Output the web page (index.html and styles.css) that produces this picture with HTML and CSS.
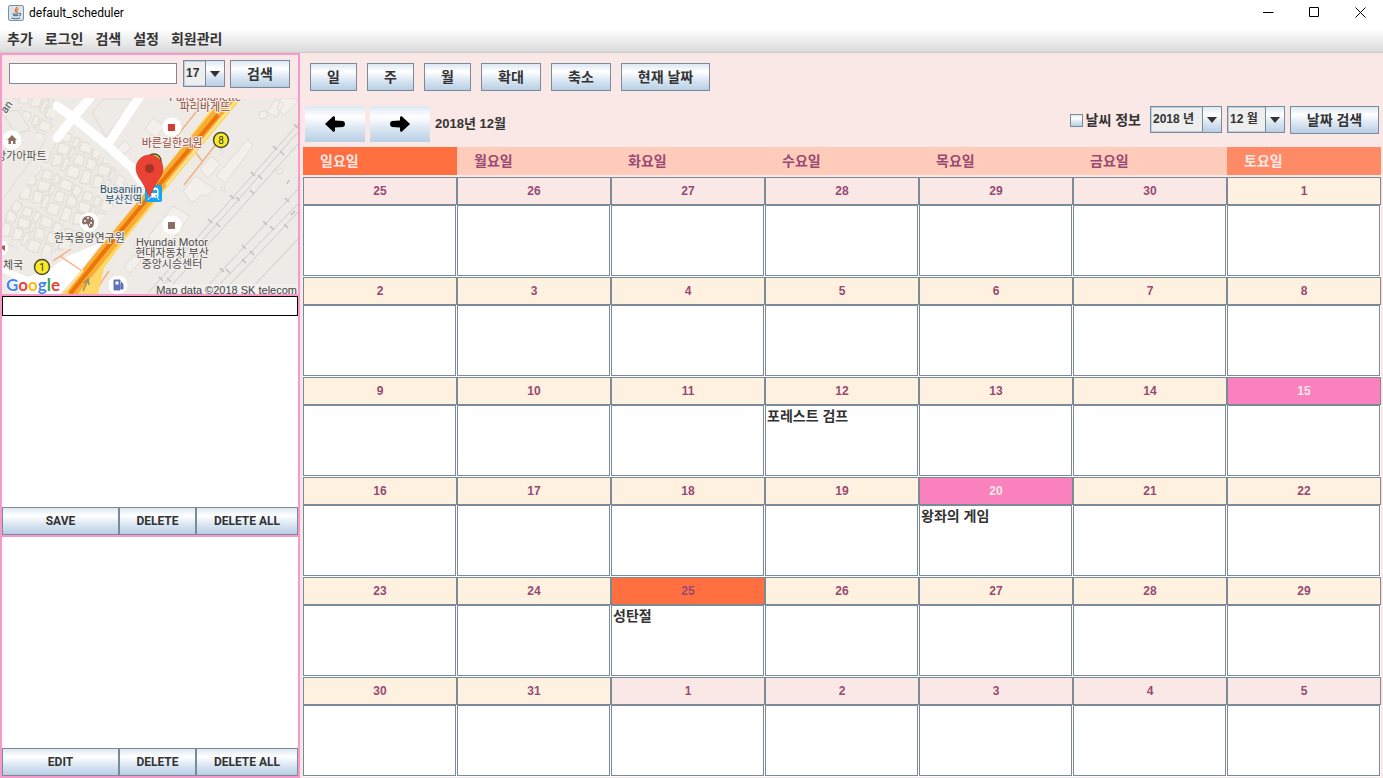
FILE: index.html
```html
<!DOCTYPE html>
<html lang="ko">
<head>
<meta charset="utf-8">
<title>default_scheduler</title>
<link rel="stylesheet" href="styles.css">
</head>
<body>
<header class="titlebar">
  <svg class="app-icon" viewBox="0 0 16 16" aria-hidden="true">
    <rect x=".5" y=".5" width="15" height="15" rx="1.5" fill="#dbe4ec" stroke="#7b93a8"/>
    <path d="M8.800 1.500c1 1.600-2.600 2.700-1.600 4.500.4.8 1 1.100.9 1.900M10.400 3.800c-1.600.8-2.200 1.500-1.300 2.700.4.6 0 1-.3 1.300" fill="none" stroke="#e8762c" stroke-width="1.300"/>
    <path d="M4.500 8.600c1.500.7 4.700.7 6.200 0M5 10.300c1.500.5 4 .5 5.300 0M3.500 13c2 .8 6.500.8 8.500 0M11 8.300c2.300-.3 2.200 2 .2 2.700" fill="none" stroke="#4f7391" stroke-width="1.100"/>
  </svg>
  <h1 class="title">default_scheduler</h1>
  <div class="window-controls">
    <button class="window-button" aria-label="최소화"><svg viewBox="0 0 11 11"><path d="M0 5.500h10.500"/></svg></button>
    <button class="window-button" aria-label="최대화"><svg viewBox="0 0 11 11"><path d="M.5.5h9v9h-9z"/></svg></button>
    <button class="window-button" aria-label="닫기"><svg viewBox="0 0 11 11"><path d="M.5.5l10 10M10.500.5l-10 10"/></svg></button>
  </div>
</header>
<nav class="menubar">
  <button class="menu">추가</button>
  <button class="menu">로그인</button>
  <button class="menu">검색</button>
  <button class="menu">설정</button>
  <button class="menu">회원관리</button>
</nav>
<div class="workspace">
  <aside class="sidebar">
    <form class="map-search">
      <input class="map-query" type="text" aria-label="장소">
      <span class="combo combo-zoom"><select aria-label="확대 수준"><option>17</option></select><span class="combo-arrow"></span></span>
      <button class="btn btn-mid" type="button">검색</button>
    </form>
    <svg class="map" viewBox="2 98 296 196" role="img" aria-label="부산진역 지도">
      <defs>
        <pattern id="lots" width="46" height="42" patternUnits="userSpaceOnUse" patternTransform="rotate(28)">
          <path d="M1 2l11-1 2 9-12 2zM15 1l9 1-1 10-7-1zM27 3l8-2 2 8-9 3zM39 1l6 1v8l-5 1zM2 15l8-1 3 10-10 2zM14 13l10 1 1 8-9 2zM27 14l12-2 1 9-10 3zM41 13l4-1v10l-3 1zM1 29l11-2 2 11-12 2zM16 26l8-1 3 12-9 3zM28 26l9-2 2 10-8 4zM40 25l5-1v13l-4 1z" fill="#f2efe8" stroke="#dbd8d2" stroke-width="1"/>
        </pattern>
      </defs>
      <rect x="2" y="98" width="296" height="196" fill="#eeeae5"/>
      <path d="M12 98H56L54 126 40 140 20 108zM56 142L72 128 128 180 130 190 100 220 88 236 64 250 42 256 2 244V218L30 180z" fill="url(#lots)"/>
      <path d="M2 112l16-2 12 20-14 4zM92 112l12-13h30l-28 38zM2 200L46 140" fill="none" stroke="#dedad4"/>
      <g fill="#f3f0eb" stroke="#dfdbd5">
        <path d="M145 129l8-11 12 8-9 12zM267 112l9-13 8 5-8 13zM281 98h16v4l-13 13-7-6zM216 176L248 139l5 7-28 37zM211 156l9 8-12 14-8-9zM195 176l20 13-8 7-4-2-11 9-9-12zM173 206l17 10-25 34-17-13zM124 267l10-12 7 6-11 12zM134 246l8-9 9 8-8 9zM116 150l9-10 6 7-6 7zM220 148l4 4-3 3zM220 189l4-3 1 5zM276 171l6-3 1 4-5 2z"/>
        <circle cx="263" cy="115" r="4"/>
      </g>
      <path d="M90 98L76 114 57 138M57 106L74 118 108 146 132 168 142 182M108 144L140 96" fill="none" stroke="#fff" stroke-width="9" stroke-linecap="round" stroke-linejoin="round"/>
      <path d="M2 266L28 277 50 269 68 256 102 242 84 267 60 294H18L26 285 2 272z" fill="#fff"/>
      <g fill="none" stroke="#f4b183" stroke-width="1.500">
        <path d="M197 111L176 137M193 149L202 161M217 143L184 185M60 256L82 271M53 261L71 249M89 276L99 284M109 271L96 290"/>
      </g>
      <g fill="none" stroke="#c9cccc" stroke-width="1">
        <path d="M298 124L148 293M298 132L156 293M298 144L165 293M298 189L201 293M298 204L211 293M298 212L222 293M298 239L247 293"/>
        <path d="M294 124l4 4M273 146l4 4M280 151l4 4M251 172l4 4M258 175l4 4M230 195l4 4M236 197l4 4M208 219l4 4M216 223l4 4M250 190l4 4M289 180l-2 4M285 198l4 4M295 211l-4 4M263 221l4 4M270 226l4 4M242 245l4 4M250 251l4 4M284 224l4 4M220 268l4 4M226 269l4 4M242 259l4 4M177 255l4 4M159 277l4 4M167 278l4 4" stroke="#bcc0c0" stroke-width="1.500"/>
      </g>
      <path d="M220 98H242L164 191 128 236 104 268 98 294H61L93 263 129 217 153 184z" fill="#fdd868"/>
      <path d="M231 98L160 184 122 230 70 294" fill="none" stroke="#f9ad32" stroke-width="12"/>
      <path d="M218 115L153 192 119 233 70 294" fill="none" stroke="#ed730b" stroke-width="4"/>
      <path d="M238 98L166 185M83 270L66 291" fill="none" stroke="#fde69a" stroke-width="2"/>
      <path d="M83 291L88 280M84 283L88 279 89 285" fill="none" stroke="#9b8e68" stroke-width="1.500"/>
      <g class="map-label">
        <g class="map-brown" text-anchor="middle">
          <text x="205" y="101">Paris Baguette</text>
          <text x="205" y="111">파리바게뜨</text>
          <text x="172" y="147">바른길한의원</text>
        </g>
        <text x="-4" y="160">앙가아파트</text>
        <text x="54" y="242">한국음양연구원</text>
        <text x="3" y="269">체국</text>
        <g text-anchor="middle">
          <text x="172" y="246">Hyundai Motor</text>
          <text x="172" y="257">현대자동차 부산</text>
          <text x="172" y="268">중앙시승센터</text>
        </g>
        <text x="6" y="114" transform="rotate(-55 6 114)">an</text>
        <g class="map-navy" text-anchor="end">
          <text x="142" y="193">Busanjin</text>
          <text class="map-small" x="142" y="203">부산진역</text>
        </g>
      </g>
      <g fill="#fff">
        <circle cx="12" cy="140" r="9.500"/><circle cx="172" cy="127" r="9.500"/><circle cx="89" cy="222" r="9.500"/><circle cx="172" cy="225" r="9.500"/><circle cx="118" cy="285" r="9.500"/><circle cx="0" cy="248" r="8"/>
      </g>
      <path d="M7 140l5-5 5 5h-1.500v4H13v-3h-2v3H8.500v-4z" fill="#8d6e63"/>
      <rect x="168" y="124" width="7" height="7" fill="#d23f31"/>
      <rect x="168" y="222" width="7" height="7" fill="#8d6e63"/>
      <path d="M2 246l3-1v6l-3-2z" fill="#8d6e63"/>
      <path d="M88 216c-4 0-6 3-6 6 0 2 2 3 4 2s2 4 4 4c3 0 4-3 4-6 0-4-3-6-6-6z" fill="#8d6e63"/>
      <path d="M84 221h2M87 218h2M91 219h1M90 223h2M89 225h1" stroke="#fff" stroke-width="1.500"/>
      <path d="M114 280h6v10h-6zM121 282l2 2v5h-2v-5" fill="#6072bb" stroke="#6072bb"/>
      <path d="M115.500 281.500h3v3h-3z" fill="#fff"/>
      <g class="route" text-anchor="middle">
        <circle cx="154" cy="161" r="7"/><circle cx="221" cy="140" r="7.500"/><circle cx="42" cy="267" r="7.500"/>
        <text x="221" y="144">8</text><text x="42" y="271">1</text>
      </g>
      <rect x="145" y="185" width="17" height="17" rx="2" fill="#14a5f4"/>
      <path d="M151 188h5q2 0 2 2v7h-9v-7q0-2 2-2zM150 197l-2 3M157 197l2 3" fill="#fff" stroke="#fff"/>
      <path d="M150 190h7v3h-7zM150 195h1.500v1.500h-1.500zM155.500 195h1.500v1.500h-1.500z" fill="#14a5f4"/>
      <path d="M149.500 155c-7.500 0-13.500 6-13.500 13.500 0 4 2 8 5 12 4 6 6 11 8.500 17 2.500-6 4.500-11 8.500-17 3-4 5-8 5-12 0-7.500-6-13.500-13.500-13.500z" fill="#ea4335" stroke="#c5362b" stroke-width=".6"/>
      <circle cx="149.500" cy="168.500" r="4.600" fill="#a5342a"/>
      <text class="google" x="6" y="291"><tspan fill="#4285f4">G</tspan><tspan fill="#ea4335">o</tspan><tspan fill="#fbbc05">o</tspan><tspan fill="#4285f4">g</tspan><tspan fill="#34a853">l</tspan><tspan fill="#ea4335">e</tspan></text>
      <rect x="158" y="284" width="140" height="10" fill="#f3f1ee" opacity=".8"/>
      <text class="credit" x="297" y="294" text-anchor="end">Map data ©2018 SK telecom</text>
    </svg>
    <section class="panel">
      <input class="memo-title" type="text" aria-label="제목">
      <textarea class="memo" aria-label="메모"></textarea>
      <div class="actions">
        <button class="btn action">SAVE</button>
        <button class="btn action">DELETE</button>
        <button class="btn action">DELETE ALL</button>
      </div>
    </section>
    <section class="panel">
      <textarea class="memo" aria-label="목록"></textarea>
      <div class="actions">
        <button class="btn action">EDIT</button>
        <button class="btn action">DELETE</button>
        <button class="btn action">DELETE ALL</button>
      </div>
    </section>
  </aside>
  <main class="main">
    <div class="views">
      <button class="btn btn-short">일</button>
      <button class="btn btn-short">주</button>
      <button class="btn btn-short">월</button>
      <button class="btn btn-mid">확대</button>
      <button class="btn btn-mid">축소</button>
      <button class="btn btn-long">현재 날짜</button>
    </div>
    <div class="navigator">
      <button class="step" aria-label="이전 달"><svg viewBox="0 0 20 16"><path d="M0 8L8.500 0 10 1V4.500L18 5Q20 5.500 20 8T18 11L10 11.500V15L8.500 16z"/></svg></button>
      <button class="step" aria-label="다음 달"><svg viewBox="0 0 20 16"><path d="M20 8L11.500 0 10 1V4.500L2 5Q0 5.500 0 8T2 11L10 11.500V15L11.500 16z"/></svg></button>
      <h2 class="period">2018년 12월</h2>
      <form class="date-search">
        <label class="weather"><input type="checkbox">날씨 정보</label>
        <span class="combo combo-year"><select aria-label="년"><option>2018 년</option></select><span class="combo-arrow"></span></span>
        <span class="combo combo-month"><select aria-label="월"><option>12 월</option></select><span class="combo-arrow"></span></span>
        <button class="btn btn-long" type="button">날짜 검색</button>
      </form>
    </div>
    <table class="calendar">
      <thead>
        <tr><th class="sunday">일요일</th><th>월요일</th><th>화요일</th><th>수요일</th><th>목요일</th><th>금요일</th><th class="saturday">토요일</th></tr>
      </thead>
      <tbody>
        <tr>
          <td><button class="day other">25</button><div class="entry"></div></td>
          <td><button class="day other">26</button><div class="entry"></div></td>
          <td><button class="day other">27</button><div class="entry"></div></td>
          <td><button class="day other">28</button><div class="entry"></div></td>
          <td><button class="day other">29</button><div class="entry"></div></td>
          <td><button class="day other">30</button><div class="entry"></div></td>
          <td><button class="day">1</button><div class="entry"></div></td>
        </tr>
        <tr>
          <td><button class="day">2</button><div class="entry"></div></td>
          <td><button class="day">3</button><div class="entry"></div></td>
          <td><button class="day">4</button><div class="entry"></div></td>
          <td><button class="day">5</button><div class="entry"></div></td>
          <td><button class="day">6</button><div class="entry"></div></td>
          <td><button class="day">7</button><div class="entry"></div></td>
          <td><button class="day">8</button><div class="entry"></div></td>
        </tr>
        <tr>
          <td><button class="day">9</button><div class="entry"></div></td>
          <td><button class="day">10</button><div class="entry"></div></td>
          <td><button class="day">11</button><div class="entry"></div></td>
          <td><button class="day">12</button><div class="entry">포레스트 검프</div></td>
          <td><button class="day">13</button><div class="entry"></div></td>
          <td><button class="day">14</button><div class="entry"></div></td>
          <td><button class="day marked">15</button><div class="entry"></div></td>
        </tr>
        <tr>
          <td><button class="day">16</button><div class="entry"></div></td>
          <td><button class="day">17</button><div class="entry"></div></td>
          <td><button class="day">18</button><div class="entry"></div></td>
          <td><button class="day">19</button><div class="entry"></div></td>
          <td><button class="day marked">20</button><div class="entry">왕좌의 게임</div></td>
          <td><button class="day">21</button><div class="entry"></div></td>
          <td><button class="day">22</button><div class="entry"></div></td>
        </tr>
        <tr>
          <td><button class="day">23</button><div class="entry"></div></td>
          <td><button class="day">24</button><div class="entry"></div></td>
          <td><button class="day holiday">25</button><div class="entry">성탄절</div></td>
          <td><button class="day">26</button><div class="entry"></div></td>
          <td><button class="day">27</button><div class="entry"></div></td>
          <td><button class="day">28</button><div class="entry"></div></td>
          <td><button class="day">29</button><div class="entry"></div></td>
        </tr>
        <tr>
          <td><button class="day">30</button><div class="entry"></div></td>
          <td><button class="day">31</button><div class="entry"></div></td>
          <td><button class="day other">1</button><div class="entry"></div></td>
          <td><button class="day other">2</button><div class="entry"></div></td>
          <td><button class="day other">3</button><div class="entry"></div></td>
          <td><button class="day other">4</button><div class="entry"></div></td>
          <td><button class="day other">5</button><div class="entry"></div></td>
        </tr>
      </tbody>
    </table>
  </main>
</div>
</body>
</html>
```
FILE: styles.css
```css
:root {
  --ink: #333;
  --line: #7a8a99;
  --blush: #fae8e6;
  --pink: #f79acb;
  --plum: #964a73;
  --steel: linear-gradient(#dde8f3, #fff 30%, #dde8f3 60%, #b8cfe5);
}

* { box-sizing: border-box; }

body {
  margin: 0;
  min-height: 100vh;
  display: flex;
  flex-direction: column;
  background: #fff;
  color: var(--ink);
  font: bold 14px/18px "Liberation Sans", "Noto Sans CJK KR", sans-serif;
}

button, input, select, textarea {
  margin: 0;
  padding: 0;
  border-radius: 0;
  color: inherit;
  font: inherit;
}

h1, h2 { margin: 0; }

.titlebar {
  display: flex;
  align-items: center;
  height: 25px;
  padding-left: 8px;
}

.app-icon { width: 16px; height: 16px; }

.title {
  margin-left: 5px;
  color: #000;
  font: 12px/18px Roboto, sans-serif;
}

.window-controls { display: flex; margin-left: auto; }

.window-button {
  display: grid;
  place-items: center;
  width: 46px;
  height: 24px;
  border: 0;
  background: none;
}

.window-button svg {
  width: 11px;
  height: 11px;
  fill: none;
  stroke: #000;
}

.menubar {
  display: flex;
  gap: 12px;
  height: 28px;
  padding: 0 7px;
  border-bottom: 1px solid #ccc;
  background: linear-gradient(#fff 15%, #dadada);
}

.menu { border: 0; background: none; }

.workspace { display: flex; flex: 1; }

.sidebar {
  display: flex;
  flex-direction: column;
  flex: none;
  width: 300px;
  border: 2px solid var(--pink);
}

.map-search {
  display: flex;
  gap: 5px;
  height: 43px;
  padding: 5px 8px 0 7px;
  background: var(--blush);
}

.map-query {
  flex: 1;
  min-width: 0;
  height: 21px;
  margin: 3px 1px 0 0;
  border: 1px solid var(--line);
  background: #fff;
}

.map { display: block; width: 100%; }

.map-label {
  fill: #4d4d4d;
  stroke: #f4f1ed;
  stroke-width: 2px;
  paint-order: stroke;
  font: 11px Roboto, "Noto Sans CJK KR", sans-serif;
}

.map-brown { fill: #93493f; }
.map-navy { fill: #1d4f73; }
.map-small { font-size: 10px; }

.route circle { fill: #fbe926; stroke: #4b4a35; stroke-width: 1.5px; }
.route text { fill: #333; font: 10px Roboto, sans-serif; }

.google { font: bold 17px Lato, sans-serif; stroke: #fff; stroke-width: 2px; paint-order: stroke; }
.credit { fill: #444; font: 11px "Liberation Sans", sans-serif; }

.panel {
  display: flex;
  flex: 1;
  flex-direction: column;
  border-top: 2px solid var(--pink);
}

.memo-title {
  height: 20px;
  border: 1px solid #000;
  background: #fff;
}

.memo {
  flex: 1;
  min-height: 0;
  border: 0;
  background: #fff;
  resize: none;
}

.actions {
  display: grid;
  grid-template-columns: 117fr 77fr 102fr;
}

.btn {
  height: 28px;
  border: 1px solid var(--line);
  background: var(--steel);
  white-space: nowrap;
}

.btn-short { width: 47px; }
.btn-mid { width: 60px; }
.btn-long { width: 89px; }
.action { font: bold 12px Roboto, sans-serif; }

.combo {
  position: relative;
  height: 27px;
}

.combo select {
  width: 100%;
  height: 100%;
  padding: 0 20px 2px 2px;
  border: 1px solid var(--line);
  background: #eee;
  box-shadow: inset 0 0 0 1px #b8cfe5;
  font-size: 12px;
  appearance: none;
}

.combo-zoom { width: 42px; }
.combo-year { width: 72px; }
.combo-month { width: 58px; }

.combo-arrow {
  position: absolute;
  inset: 0 0 0 auto;
  display: grid;
  place-items: center;
  width: 20px;
  border: 1px solid var(--line);
  background: var(--steel);
  pointer-events: none;
}

.combo-arrow::after {
  content: "";
  border: 5px solid transparent;
  border-top: 6px solid #333;
  border-bottom: 0;
}

.main {
  flex: 1;
  min-width: 0;
  padding: 10px 2px 0 3px;
  background: var(--blush);
}

.views {
  display: flex;
  gap: 10px;
  padding-left: 7px;
}

.navigator {
  display: flex;
  align-items: center;
  gap: 5px;
  margin: 15px 2px 5px;
}

.step {
  display: grid;
  place-items: center;
  width: 60px;
  height: 36px;
  border: 0;
  background: var(--steel);
}

.step svg { width: 20px; height: 16px; }

.period { font-size: 13px; line-height: 18px; }

.date-search {
  display: flex;
  align-self: flex-start;
  gap: 5px;
  margin-left: auto;
}

.weather {
  display: flex;
  align-items: center;
  gap: 3px;
  height: 28px;
  margin-right: 4px;
}

.weather input {
  width: 13px;
  height: 13px;
  border: 1px solid var(--line);
  background: var(--steel);
  appearance: none;
}

.calendar {
  width: 100%;
  table-layout: fixed;
  border-spacing: 0;
}

.calendar th {
  height: 30px;
  padding: 0 17px;
  border-bottom: 2px solid var(--blush);
  background: #ffcbba;
  color: var(--plum);
  text-align: left;
}

.calendar .sunday { background: #ff6f40; color: #fae8e6; }
.calendar .saturday { background: #ff8b66; color: #fae8e6; }

.calendar td {
  padding: 0 0 1px;
  background: #fff;
  vertical-align: top;
}

.day {
  display: block;
  width: 100%;
  height: 28px;
  border: 1px solid var(--line);
  background: #fff1df;
  color: var(--plum);
  font-size: 12px;
}

.day.other { background: var(--blush); }
.day.marked { background: #f982be; color: #fae8e6; }
.day.holiday { background: #ff6f40; }

.entry {
  height: 71px;
  margin-right: 1px;
  padding: 0 1px;
  border: 1px solid var(--line);
  line-height: 20px;
}
```
